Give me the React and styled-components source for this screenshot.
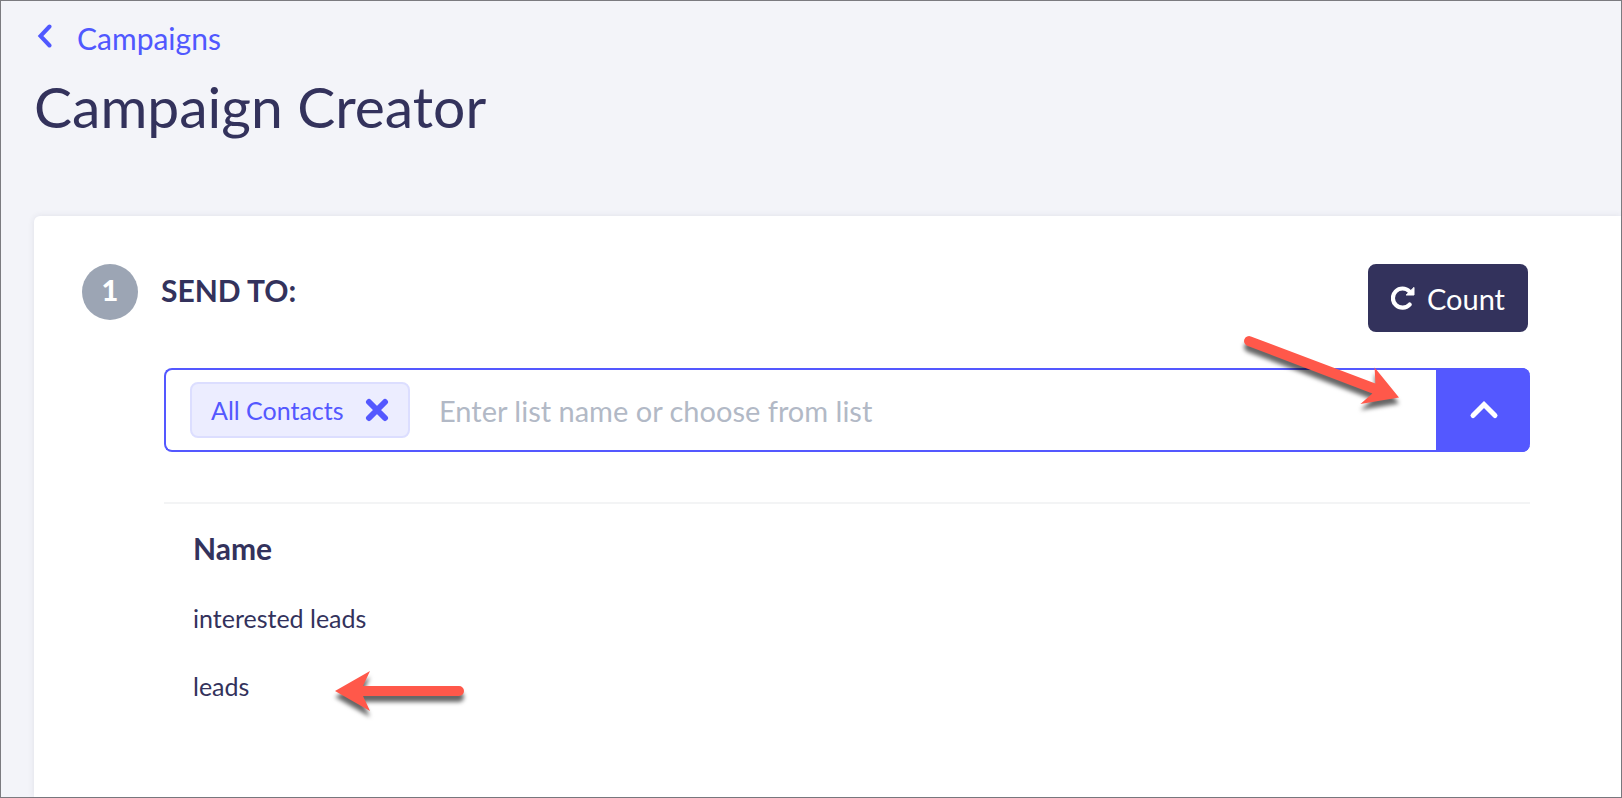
import React, { useState } from "react";
import styled, { createGlobalStyle } from "styled-components";

const LISTS = ["interested leads", "leads"];

export default function App() {
  const [tags, setTags] = useState(["All Contacts"]);
  const [open, setOpen] = useState(true);
  const [query, setQuery] = useState("");

  const removeTag = (name) => {
    setTags(tags.filter((tag) => tag !== name));
  };

  return (
    <Page>
      <GlobalStyle />
      <TopBar>
        <BackLink href="#campaigns">
          <svg width="16" height="24" viewBox="0 0 16 24" aria-hidden="true">
            <path d="M12.5 2.5 L3.5 12 L12.5 21.5" />
          </svg>
          Campaigns
        </BackLink>
        <Title>Campaign Creator</Title>
      </TopBar>

      <Card>
        <StepHeader>
          <StepNumber>1</StepNumber>
          <StepTitle>SEND TO:</StepTitle>
          <CountButton type="button">
            <RedoIcon />
            Count
          </CountButton>
        </StepHeader>

        <StepBody>
          <Picker>
            {tags.map((tag) => (
              <Tag key={tag}>
                {tag}
                <TagRemove type="button" aria-label={`Remove ${tag}`} onClick={() => removeTag(tag)}>
                  <svg width="24" height="24" viewBox="0 0 24 24" aria-hidden="true">
                    <path d="M4 4 L20 20 M20 4 L4 20" />
                  </svg>
                </TagRemove>
              </Tag>
            ))}
            <SearchInput
              type="text"
              aria-label="List name"
              placeholder="Enter list name or choose from list"
              value={query}
              onChange={(e) => setQuery(e.target.value)}
            />
            <Toggle type="button" aria-label="Toggle lists" aria-expanded={open} onClick={() => setOpen(!open)}>
              <Chevron $open={open} width="28" height="18" viewBox="0 0 28 18" aria-hidden="true">
                <path d="M4 14.5 L15 3.5 L26 14.5" />
              </Chevron>
            </Toggle>
            <PickerArrow />
          </Picker>

          {open && (
            <ListTable>
              <thead>
                <tr>
                  <HeadCell scope="col">Name</HeadCell>
                </tr>
              </thead>
              <tbody>
                {LISTS.map((name) => (
                  <tr key={name}>
                    <Cell>
                      <CellInner>
                        {name}
                        {name === "leads" && <RowArrow />}
                      </CellInner>
                    </Cell>
                  </tr>
                ))}
              </tbody>
            </ListTable>
          )}
        </StepBody>
      </Card>
    </Page>
  );
}

function RedoIcon() {
  return (
    <svg width="24" height="26" viewBox="0 0 24 26" aria-hidden="true">
      <path d="M18.4 6.4 A9.6 9.6 0 1 0 18.6 19.6" fill="none" stroke="#fff" strokeWidth="4.2" strokeLinecap="round" />
      <path d="M23 2.4 V10 H15.2 Z" fill="#fff" stroke="#fff" strokeWidth="1" strokeLinejoin="round" />
    </svg>
  );
}

function PickerArrow() {
  return (
    <PickerArrowSvg width="156" height="69" viewBox="0 0 156 69" aria-hidden="true">
      <path d="M6.9 0.4 L131.4 47.4 L130.6 31.4 L155 61.6 L116.4 68 L128.4 57.4 L3.2 9.7 A5 5 0 0 1 6.9 0.4 Z" />
    </PickerArrowSvg>
  );
}

function RowArrow() {
  return (
    <RowArrowSvg width="130" height="40" viewBox="0 0 130 40" aria-hidden="true">
      <path d="M0 20 L35 0 L28 15 H124 A5 5 0 0 1 124 25 H28 L35 40 Z" />
    </RowArrowSvg>
  );
}

const GlobalStyle = createGlobalStyle`
  * {
    box-sizing: border-box;
  }
  body {
    margin: 0;
    background: #f3f4f9;
    color: #33325c;
    font-family: Lato, "Liberation Sans", sans-serif;
  }
  button, input {
    font-family: inherit;
  }
`;
const Page = styled.div`
  display: flex;
  flex-direction: column;
  min-height: 100vh;
  border: 1px solid #7b7b80;
`;
const TopBar = styled.header`
  padding: 19px 33px 0;
`;
const BackLink = styled.a`
  display: flex;
  align-items: center;
  gap: 24px;
  width: fit-content;
  margin-left: 3px;
  color: #5058ff;
  font-size: 30px;
  line-height: 36px;
  text-decoration: none;
  svg {
    margin-bottom: 4px;
    fill: none;
    stroke: #5058ff;
    stroke-width: 4;
    stroke-linecap: round;
  }
`;
const Title = styled.h1`
  margin: 15px 0 75px;
  font-size: 57px;
  font-weight: 400;
  line-height: 70px;
`;
const Card = styled.main`
  flex: 1;
  margin-left: 33px;
  padding: 48px 91px 48px 48px;
  border-top-left-radius: 6px;
  background: #fff;
  box-shadow: 0 0 6px rgba(51, 50, 92, 0.1);
`;
const StepHeader = styled.div`
  display: flex;
  align-items: flex-start;
  gap: 23px;
  padding-right: 2px;
`;
const StepNumber = styled.span`
  width: 56px;
  height: 56px;
  border-radius: 50%;
  background: #9ca5b4;
  color: #fff;
  font-size: 29px;
  font-weight: 900;
  line-height: 52px;
  text-align: center;
`;
const StepTitle = styled.h2`
  flex: 1;
  margin: 0;
  font-size: 30px;
  font-weight: 700;
  line-height: 52px;
`;
const CountButton = styled.button`
  display: flex;
  align-items: center;
  justify-content: center;
  gap: 12px;
  width: 160px;
  height: 68px;
  padding: 0;
  border: 0;
  border-radius: 8px;
  background: #33325c;
  color: #fff;
  font-size: 29px;
  cursor: pointer;
`;
const StepBody = styled.div`
  margin-top: 36px;
  padding-left: 82px;
`;
const Picker = styled.div`
  position: relative;
  display: flex;
  align-items: center;
  height: 84px;
  padding-left: 24px;
  border: 2px solid #5458ff;
  border-right: 0;
  border-radius: 8px;
`;
const Tag = styled.span`
  display: flex;
  align-items: center;
  justify-content: space-between;
  min-width: 220px;
  height: 56px;
  padding: 0 19px;
  border: 2px solid #dcdeff;
  border-radius: 8px;
  background: #ecedff;
  color: #5458ff;
  font-size: 25px;
`;
const TagRemove = styled.button`
  display: flex;
  padding: 0;
  border: 0;
  background: none;
  cursor: pointer;
  svg {
    stroke: #5458ff;
    stroke-width: 6;
    stroke-linecap: round;
  }
`;
const SearchInput = styled.input`
  flex: 1;
  min-width: 0;
  height: 100%;
  padding: 0 29px;
  border: 0;
  outline: 0;
  background: none;
  color: #33325c;
  font-size: 29px;
  &::placeholder {
    color: #b2b9c6;
    opacity: 1;
  }
`;
const Toggle = styled.button`
  display: flex;
  align-items: center;
  justify-content: center;
  align-self: stretch;
  width: 94px;
  margin: -2px 0;
  padding: 0;
  border: 0;
  border-radius: 0 8px 8px 0;
  background: #5458ff;
  cursor: pointer;
`;
const Chevron = styled.svg`
  overflow: visible;
  fill: none;
  stroke: #fff;
  stroke-width: 5;
  stroke-linecap: round;
  transform: ${(props) => (props.$open ? "none" : "rotate(180deg)")};
`;
const ListTable = styled.table`
  width: 100%;
  margin-top: 50px;
  border-top: 2px solid #f3f4f5;
  border-spacing: 0;
  text-align: left;
`;
const HeadCell = styled.th`
  height: 80px;
  padding: 8px 29px 0;
  font-size: 30px;
  font-weight: 700;
`;
const Cell = styled.td`
  height: 68px;
  padding: 0 29px;
  font-size: 25px;
`;
const CellInner = styled.div`
  position: relative;
`;
const ArrowSvg = styled.svg`
  position: absolute;
  overflow: visible;
  fill: #ff584a;
  filter: drop-shadow(0 6px 2px rgba(0, 0, 0, 0.6));
  pointer-events: none;
`;
const PickerArrowSvg = styled(ArrowSvg)`
  top: -34px;
  right: 130px;
`;
const RowArrowSvg = styled(ArrowSvg)`
  top: 0;
  left: 142px;
`;
